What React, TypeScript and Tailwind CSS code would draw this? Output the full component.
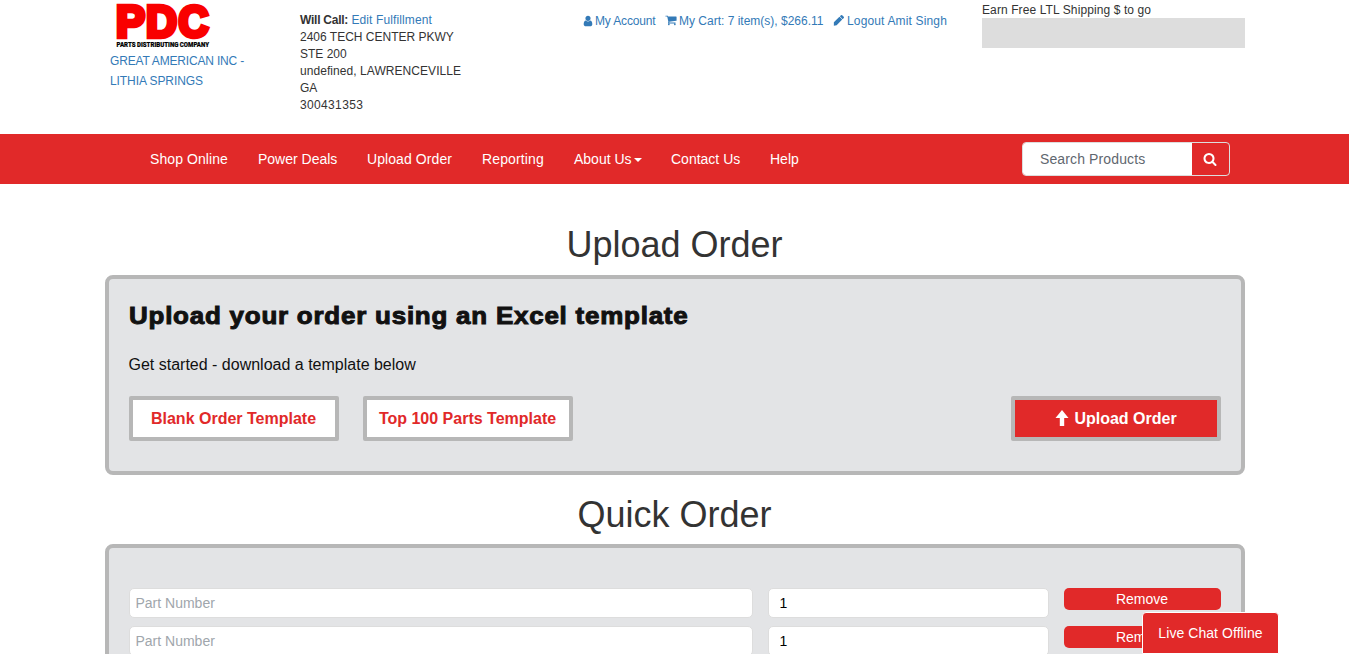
import type { ReactNode } from "react";

function Logo() {
  return (
    <svg className="ml-[5px] block overflow-visible" width="98" height="48" viewBox="0 0 98 48">
      <g fontFamily="Liberation Sans, sans-serif" fontWeight="700" fontSize="44" fill="#f90000" stroke="#f90000" strokeWidth="4.5">
        <text x="1" y="36.5" textLength="29" lengthAdjust="spacingAndGlyphs">P</text>
        <text x="31" y="36.5" textLength="31" lengthAdjust="spacingAndGlyphs">D</text>
        <text x="63.5" y="36.5" textLength="30" lengthAdjust="spacingAndGlyphs">C</text>
      </g>
      <text x="1.5" y="46.5" textLength="92.5" lengthAdjust="spacingAndGlyphs" fontFamily="Roboto, sans-serif" fontWeight="900" fontSize="7" fill="#000" stroke="#000" strokeWidth="0.2">
        PARTS DISTRIBUTING COMPANY
      </text>
    </svg>
  );
}

const iconPaths = {
  user: "M1536 1399q0 109-62.5 187t-150.5 78h-854q-88 0-150.5-78t-62.5-187q0-85 8.5-160.5t31.5-152 58.5-131 94-89 134.5-34.5q131 128 313 128t313-128q76 0 134.5 34.5t94 89 58.5 131 31.5 152 8.5 160.5zm-256-887q0 159-112.5 271.5t-271.5 112.5-271.5-112.5-112.5-271.5 112.5-271.5 271.5-112.5 271.5 112.5 112.5 271.5z",
  cart: "M704 1536q0 52-38 90t-90 38-90-38-38-90 38-90 90-38 90 38 38 90zm896 0q0 52-38 90t-90 38-90-38-38-90 38-90 90-38 90 38 38 90zm128-1088v512q0 24-16.5 42.5t-40.5 21.5l-1044 122q13 60 13 70 0 16-24 64h920q26 0 45 19t19 45-19 45-45 19h-1024q-26 0-45-19t-19-45q0-11 8-31.5t16-36 21.5-40 15.5-29.5l-177-823h-204q-26 0-45-19t-19-45 19-45 45-19h256q16 0 28.5 6.5t19.5 15.5 13 24.5 8 26 5.5 29.5 4.5 26h1201q26 0 45 19t19 45z",
  pencil: "M1643 512q0 53-37 90l-166 166-416-416 166-165q36-38 90-38 53 0 91 38l235 234q37 39 37 91zM960 416l416 416-832 832-416 80 0-496z",
  search: "M1216 832q0-185-131.5-316.5t-316.5-131.5-316.5 131.5-131.5 316.5 131.5 316.5 316.5 131.5 316.5-131.5 131.5-316.5zm512 832q0 52-38 90t-90 38q-54 0-90-38l-343-342q-179 124-399 124-143 0-273.5-55.5t-225-150-150-225-55.5-273.5 55.5-273.5 150-225 225-150 273.5-55.5 273.5 55.5 225 150 150 225 55.5 273.5q0 220-124 399l343 343q37 37 37 90z",
};

function Icon({ name, className }: { name: keyof typeof iconPaths; className: string }) {
  return (
    <svg viewBox="0 0 1792 1792" fill="currentColor" className={"shrink-0 " + className}>
      <path d={iconPaths[name]} />
    </svg>
  );
}

function Header() {
  return (
    <header className="flex h-[134px] pl-[110px] text-xs leading-[17px]">
      <div className="w-[190px] text-[#337ab7]">
        <Logo />
        <div className="mt-[3px] leading-5">
          <div className="tracking-[-0.18px]">GREAT AMERICAN INC -</div>
          <div className="tracking-[-0.08px]">LITHIA SPRINGS</div>
        </div>
      </div>
      <div className="w-[283px] pt-3">
        <b className="tracking-[-0.25px]">Will Call:</b> <a className="tracking-[0.12px] text-[#337ab7]">Edit Fulfillment</a>
        <br />2406 TECH CENTER PKWY
        <br />STE 200
        <br /><span className="tracking-[0.06px]">undefined, LAWRENCEVILLE</span>
        <br />GA
        <br /><span className="tracking-[0.35px]">300431353</span>
      </div>
      <div className="flex w-[399px] whitespace-nowrap pt-[13px] text-[#337ab7]">
        <a className="flex w-[82px] tracking-[-0.15px]"><Icon name="user" className="-ml-px mr-px mt-[2px] size-3" />My Account</a>
        <a className="flex w-[168px]"><Icon name="cart" className="mr-[2px] mt-px size-3" />My Cart: 7 item(s), $266.11</a>
        <a className="flex tracking-[0.15px]"><Icon name="pencil" className="mr-[2px] mt-px size-3" />Logout Amit Singh</a>
      </div>
      <div className="w-[263px] pt-[2px]">
        <div className="h-4 tracking-[0.1px]">Earn Free LTL Shipping $ to go</div>
        <div className="h-[30px] bg-[#ddd]" />
      </div>
    </header>
  );
}

function Nav() {
  return (
    <nav className="flex h-[50px] items-center justify-between bg-[#e12929] pl-[150px] pr-[119px] text-sm text-white">
      <div className="flex gap-[30px] whitespace-nowrap">
        <a className="w-[78px] tracking-[0.08px]">Shop Online</a>
        <a className="w-[79px]">Power Deals</a>
        <a className="w-[85px] tracking-[0.08px]">Upload Order</a>
        <a className="w-[62px] tracking-[0.12px]">Reporting</a>
        <a className="flex w-[67px] items-center">
          About Us
          <span className="ml-[2px] mt-[2px] border-x-4 border-t-4 border-x-transparent border-t-white" />
        </a>
        <a className="w-[69px]">Contact Us</a>
        <a>Help</a>
      </div>
      <div className="flex h-[34px] w-[208px] overflow-hidden rounded border border-[#ddd]">
        <input className="w-[169px] bg-white pl-[17px] text-sm tracking-[0.12px] outline-none placeholder:text-[#5f676f]" placeholder="Search Products" />
        <button className="flex flex-1 items-center justify-center pr-[2px]"><Icon name="search" className="size-[14px]" /></button>
      </div>
    </nav>
  );
}

function Panel({ className, children }: { className: string; children: ReactNode }) {
  return <section className={"mx-auto w-[1140px] rounded-lg border-4 border-[#b7b7b7] bg-[#e3e4e6] px-5 " + className}>{children}</section>;
}

function OrderRow() {
  return (
    <div className="flex h-[30px] text-sm">
      <input className="w-[624px] rounded-[5px] border border-[#ddd] bg-white px-1.5 placeholder:text-[#a0a6ac]" placeholder="Part Number" />
      <input className="ml-[15px] w-[281px] rounded-[5px] border border-[#ddd] bg-white px-[11px] text-black" defaultValue="1" />
      <button className="ml-[15px] h-[22px] w-[157px] rounded-[5px] bg-[#e12929] text-white">Remove</button>
    </div>
  );
}

export default function App() {
  return (
    <div className="h-[654px] w-[1349px] overflow-hidden bg-white font-['Liberation_Sans',Arial,sans-serif] text-[#333]">
      <Header />
      <Nav />
      <main>
        <h1 className="pt-[41px] text-center text-4xl leading-10">Upload Order</h1>
        <Panel className="mt-[10px] h-[200px] pt-5 text-[#111]">
          <h2 className="h-10 w-[520px] origin-left scale-x-[1.08] whitespace-nowrap text-[24px] font-bold leading-[34px] tracking-[0.73px] [-webkit-text-stroke:1px_#111]">Upload your order using an Excel template</h2>
          <p className="mt-[15px] text-base leading-[22px]">Get started - download a template below</p>
          <div className="mt-5 flex gap-6 text-base font-bold">
            <button className="h-[45px] w-[210px] rounded-[2px] border-4 border-[#b7b7b7] bg-white text-[#e12929]">Blank Order Template</button>
            <button className="h-[45px] w-[210px] rounded-[2px] border-4 border-[#b7b7b7] bg-white text-[#e12929]">Top 100 Parts Template</button>
            <button className="ml-auto flex h-[45px] w-[210px] items-center justify-center gap-[5px] rounded-[2px] border-4 border-[#b7b7b7] bg-[#e12929] pl-px text-white">
              <svg width="14" height="17" viewBox="0 0 14 17" fill="currentColor"><path d="M7 0 13.5 8H9.2v8H4.8V8H.5z" /></svg>
              Upload Order
            </button>
          </div>
        </Panel>
        <h1 className="pt-5 text-center text-4xl leading-10">Quick Order</h1>
        <Panel className="mt-[9px] flex h-[300px] flex-col gap-2 pt-10">
          <OrderRow />
          <OrderRow />
        </Panel>
      </main>
      <button className="fixed bottom-0 right-[70px] h-[42px] w-[137px] whitespace-nowrap rounded-t-[4px] border border-white bg-[#e12929] text-sm tracking-[0.06px] text-white">Live Chat Offline</button>
    </div>
  );
}
